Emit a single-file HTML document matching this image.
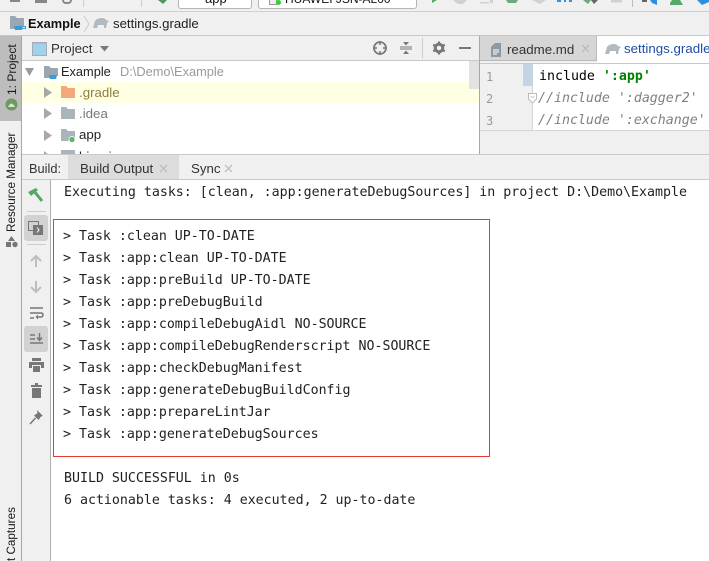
<!DOCTYPE html>
<html><head><meta charset="utf-8">
<style>
html,body{margin:0;padding:0;background:#f0f0f0}
#r{position:relative;width:709px;height:561px;overflow:hidden;background:#f0f0f0;font-family:"Liberation Sans",sans-serif;font-size:13px;color:#222}
#r div,#r svg,#r span.a{position:absolute}
.t{white-space:nowrap;line-height:16px}
.m{font-family:"DejaVu Sans Mono","Liberation Mono",monospace;font-size:13.28px;white-space:pre;line-height:22px;color:#1f1f1f}
.v{white-space:nowrap;transform-origin:0 0;transform:rotate(-90deg);line-height:14px;font-size:12px;color:#1a1a1a}
</style></head><body>
<div id="r">
<!-- top toolbar -->
<div style="left:0;top:11px;width:709px;height:1px;background:#d0d0d0"></div>
<div style="left:10px;top:0;width:10px;height:2px;background:#888"></div>
<div style="left:35px;top:0;width:12px;height:3px;background:#888"></div>
<div style="left:62px;top:0;width:10px;height:4px;border-radius:0 0 5px 5px;border:solid #888;border-width:0 2px 2px;box-sizing:border-box"></div>
<div style="left:83px;top:0;width:1px;height:7px;background:#ccc"></div>
<div style="left:141px;top:0;width:1px;height:7px;background:#ccc"></div>
<svg style="left:158px;top:0" width="10" height="4"><path d="M0 0L5 4L9 0Z" fill="#4e9a5a"/></svg>
<div style="left:178px;top:-8px;width:72px;height:15px;background:#fff;border:1px solid #b5b5b5;border-radius:3px"></div>
<div class="t" style="left:205px;top:-9px;color:#111">app</div>
<div style="left:258px;top:-8px;width:157px;height:15px;background:#fff;border:1px solid #b5b5b5;border-radius:3px"></div>
<div style="left:269px;top:-2px;width:6px;height:5px;border:1px solid #99a;background:#eee"></div>
<div style="left:276px;top:0;width:5px;height:5px;border-radius:50%;background:#2bd62b"></div>
<div class="t" style="left:285px;top:-9px;color:#111;font-size:12px">HUAWEI JSN-AL00</div>
<svg style="left:0;top:0" width="709" height="8">
<path d="M432 0V3L437 0Z" fill="#55a868"/>
<path d="M453 0L458 4L463 4L467 0Z" fill="#d0d0d0"/>
<path d="M480 2H489V3.500H480Z M490 0H493V3H490Z" fill="#cfcfcf"/>
<path d="M506 0L508 3H516L518 0Z" fill="#6fa880"/>
<path d="M532 0L540 4L546 0Z" fill="#d0d0d0"/>
<path d="M557 0H561V2H557Z M564 0H566V2H564Z M569 0H572V2H569Z" fill="#3d8fd0"/>
<path d="M583 0L588 4L591 0Z" fill="#6fa880"/><path d="M591 0L594 4L598 0Z" fill="#666"/>
<path d="M611 0H622V2.500H611Z" fill="#d0d0d0"/>
<path d="M642 0H647V2H642Z" fill="#666"/><path d="M650 0H657V5L652 3Z" fill="#2e8fdd"/>
<path d="M670 3L672 0H680L683 5H670Z" fill="#55a868"/>
<path d="M697 0H709V2L702 5Z" fill="#2e8fdd"/>
</svg>
<div style="left:632px;top:0;width:1px;height:7px;background:#bbb"></div>
<!-- breadcrumb -->
<svg style="left:10px;top:16px" width="16" height="15"><path d="M0 0H5L7 2H14V10H8V13H0Z" fill="#9aa7b0"/><path d="M4 10H13L12 14H5Z" fill="#3d9ad9"/><path d="M13 10.500H15.500V12.500H12.500" fill="none" stroke="#3d9ad9"/></svg>
<div class="t" style="left:28px;top:16px;font-weight:bold;color:#111;font-size:12.800px">Example</div>
<svg style="left:83px;top:15px" width="8" height="18"><path d="M1 1L6 9L1 17" fill="none" stroke="#ccc"/></svg>
<svg style="left:93px;top:17px" width="16" height="12"><path d="M0 11L2 4Q4 1 9 1Q12 1 13 3L16 4L14 6L13 11H11V8H5L4 11Z" fill="#b0bac0"/></svg>
<div class="t" style="left:113px;top:16px;color:#222;font-size:13.200px">settings.gradle</div>
<div style="left:0;top:35px;width:709px;height:1px;background:#c9c9c9"></div>
<!-- left stripe -->
<div style="left:0;top:36px;width:21px;height:85px;background:#bdbdbd"></div>
<div style="left:21px;top:36px;width:1px;height:525px;background:#a8a8a8"></div>
<div class="v" style="left:5px;top:95px">1: Project</div>
<svg style="left:5px;top:98px" width="13" height="13"><circle cx="6.500" cy="6.500" r="6" fill="#6a9a5c"/><path d="M3 9Q6.500 2 10 9Z" fill="#ddd"/></svg>
<div class="v" style="left:5px;top:232px;font-size:11.700px">Resource Manager</div>
<svg style="left:5px;top:236px" width="13" height="14"><path d="M6.500 0L10 5H3Z" fill="#777"/><rect x="1" y="6" width="5" height="5" fill="#777"/><circle cx="10" cy="8.500" r="2.700" fill="#777"/></svg>
<div class="v" style="left:5px;top:561px;font-size:11.700px">t Captures</div>
<!-- project header -->
<div style="left:22px;top:36px;width:458px;height:24px;background:#f0f0f0"></div>
<div style="left:32px;top:42px;width:13px;height:12px;background:#9fd3ec;border:1px solid #aab;box-shadow:inset 0 1px 0 #bbb"></div>
<div class="t" style="left:51px;top:41px;color:#333;font-size:13.300px">Project</div>
<svg style="left:100px;top:46px" width="10" height="6"><path d="M0 0H9L4.500 5.500Z" fill="#777"/></svg>
<svg style="left:372px;top:40px" width="16" height="16"><circle cx="8" cy="8" r="6" fill="none" stroke="#777" stroke-width="1.700"/><path d="M8 1V5M8 11V15M1 8H5M11 8H15" stroke="#777" stroke-width="1.500"/></svg>
<svg style="left:399px;top:41px" width="14" height="14"><path d="M1 6H13M1 8H13" stroke="#777"/><path d="M4 1H10L7 4.500Z M4 13H10L7 9.500Z" fill="#777"/></svg>
<div style="left:422px;top:38px;width:1px;height:20px;background:#ccc"></div>
<svg style="left:432px;top:41px" width="14" height="14"><circle cx="7" cy="7" r="3.800" fill="none" stroke="#777" stroke-width="3"/><path d="M7 .5V3M7 11V13.500M1.200 3.700L3.300 5M10.700 9L12.800 10.300M1.200 10.300L3.300 9M10.700 5L12.800 3.700" stroke="#777" stroke-width="2.200"/></svg>
<div style="left:459px;top:47px;width:12px;height:2px;background:#777"></div>
<div style="left:22px;top:60px;width:458px;height:1px;background:#c9c9c9"></div>
<!-- tree -->
<div style="left:22px;top:61px;width:458px;height:93px;background:#fff;overflow:hidden"></div>
<div style="left:22px;top:82px;width:458px;height:21px;background:#ffffe4"></div>
<div style="left:469px;top:61px;width:10px;height:28px;background:#e2e2e2"></div>
<svg style="left:25px;top:68px" width="10" height="9"><path d="M0 0H9L4.500 8Z" fill="#9a9a9a"/></svg>
<svg style="left:44px;top:65px" width="16" height="15"><path d="M0 1H5L7 3H14V11H8V13H0Z" fill="#9aa7b0"/><path d="M5 10H13L12 14H6Z" fill="#3d9ad9"/></svg>
<div class="t" style="left:61px;top:64px;color:#222;font-size:12.800px">Example</div>
<div class="t" style="left:120px;top:64px;color:#9a9a9a;font-size:12.800px">D:\Demo\Example</div>
<svg style="left:44px;top:87px" width="9" height="11"><path d="M0 0L8 5.500L0 11Z" fill="#a8a8a8"/></svg>
<svg style="left:61px;top:86px" width="15" height="13"><path d="M0 0H5L7 2H14V12H0Z" fill="#f4a778"/></svg>
<div class="t" style="left:79px;top:85px;color:#8f7f3f;font-size:13.300px">.gradle</div>
<svg style="left:44px;top:108px" width="9" height="11"><path d="M0 0L8 5.500L0 11Z" fill="#a8a8a8"/></svg>
<svg style="left:61px;top:107px" width="15" height="13"><path d="M0 0H5L7 2H14V12H0Z" fill="#aab4bb"/></svg>
<div class="t" style="left:79px;top:106px;color:#777;font-size:13.300px">.idea</div>
<svg style="left:44px;top:130px" width="9" height="11"><path d="M0 0L8 5.500L0 11Z" fill="#a8a8a8"/></svg>
<svg style="left:61px;top:129px" width="16" height="14"><path d="M0 0H5L7 2H14V12H0Z" fill="#aab4bb"/><circle cx="11" cy="10.500" r="3" fill="#5cb85c" stroke="#fff" stroke-width=".8"/></svg>
<div class="t" style="left:79px;top:127px;color:#222;font-size:13.300px">app</div>
<svg style="left:44px;top:151px" width="9" height="3"><path d="M0 0L4 3H0Z" fill="#a8a8a8"/></svg>
<div style="left:61px;top:150px;width:14px;height:4px;background:#aab4bb"></div>
<div style="left:79px;top:150px;width:55px;height:4px;overflow:hidden"><div class="t" style="left:0;top:-1px;color:#222;font-size:13.300px">binaries</div></div>
<div style="left:22px;top:154px;width:687px;height:1px;background:#c9c9c9"></div>
<!-- editor -->
<div style="left:479px;top:36px;width:1px;height:118px;background:#a8a8a8"></div>
<div style="left:480px;top:36px;width:117px;height:24px;background:#d6d6d6"></div>
<div style="left:596px;top:36px;width:1px;height:24px;background:#bcbcbc"></div>
<svg style="left:491px;top:43px" width="11" height="14"><path d="M0 4L4 0H10V14H0Z" fill="#8d9aa3"/><path d="M2 7H8M2 9H8M2 11H6" stroke="#fff"/></svg>
<div class="t" style="left:507px;top:42px;color:#333;font-size:13.300px">readme.md</div>
<svg style="left:581px;top:44px" width="9" height="9"><path d="M1 1L8 8M8 1L1 8" stroke="#b5b5b5"/></svg>
<div style="left:597px;top:36px;width:112px;height:27px;background:#fff"></div>
<svg style="left:605px;top:43px" width="16" height="12"><path d="M0 11L2 4Q4 1 9 1Q12 1 13 3L16 4L14 6L13 11H11V8H5L4 11Z" fill="#b0bac0"/></svg>
<div class="t" style="left:624px;top:41px;color:#1f4ea8;font-size:13.300px">settings.gradle</div>
<div style="left:480px;top:60px;width:117px;height:1px;background:#b8b8b8"></div>
<div style="left:480px;top:63px;width:229px;height:1px;background:#c9c9c9"></div>
<div style="left:480px;top:64px;width:53px;height:66px;background:#f0f0f0"></div>
<div style="left:533px;top:64px;width:176px;height:66px;background:#fff"></div>
<div style="left:532px;top:64px;width:1px;height:66px;background:#d5d5d5"></div>
<div style="left:523px;top:64px;width:10px;height:22px;background:#c3d4e4"></div>
<div class="m" style="left:486px;top:66px;color:#999;font-size:12px">1</div>
<div class="m" style="left:486px;top:88px;color:#999;font-size:12px">2</div>
<div class="m" style="left:486px;top:110px;color:#999;font-size:12px">3</div>
<div class="m" style="left:539px;top:66px;color:#000">include <b style="color:#008000">':app'</b></div>
<svg style="left:528px;top:93px" width="10" height="11"><path d="M.5 .5H8.500V6L4.500 10L.5 6Z M2.500 4H6.500" fill="#fff" stroke="#bbb"/></svg>
<div class="m" style="left:538px;top:88px;color:#808080;font-style:italic">//include ':dagger2'</div>
<div class="m" style="left:538px;top:110px;color:#808080;font-style:italic">//include ':exchange'</div>
<div style="left:480px;top:130px;width:229px;height:1px;background:#d5d5d5"></div>
<!-- build header -->
<div style="left:22px;top:155px;width:687px;height:24px;background:#f0f0f0"></div>
<div style="left:68px;top:155px;width:111px;height:24px;background:#dcdcdc"></div>
<div class="t" style="left:29px;top:161px;color:#333;font-size:12.800px">Build:</div>
<div class="t" style="left:80px;top:161px;color:#333;font-size:13.300px">Build Output</div>
<svg style="left:159px;top:164px" width="9" height="9"><path d="M1 1L8 8M8 1L1 8" stroke="#b5b5b5"/></svg>
<div class="t" style="left:191px;top:161px;color:#333;font-size:13.300px">Sync</div>
<svg style="left:224px;top:164px" width="9" height="9"><path d="M1 1L8 8M8 1L1 8" stroke="#b5b5b5"/></svg>
<div style="left:22px;top:179px;width:687px;height:1px;background:#c9c9c9"></div>
<!-- build left bar -->
<div style="left:50px;top:180px;width:1px;height:381px;background:#b0b0b0"></div>
<div style="left:51px;top:180px;width:658px;height:381px;background:#fff"></div>
<svg style="left:27px;top:186px" width="18" height="18"><path d="M1 6L9 2L11 4L4 10Z" fill="#55a868"/><path d="M7 5L15 15" stroke="#55a868" stroke-width="3"/></svg>
<div style="left:27px;top:211px;width:19px;height:1px;background:#ccc"></div>
<div style="left:24px;top:215px;width:24px;height:26px;background:#d2d2d2;border-radius:3px"></div>
<svg style="left:28px;top:221px" width="16" height="15"><rect x=".5" y=".5" width="10" height="9" fill="none" stroke="#777"/><rect x="5" y="4" width="10" height="10" fill="#777"/><path d="M9 6.500L11 9L9 11.500" fill="none" stroke="#fff"/></svg>
<div style="left:27px;top:244px;width:19px;height:1px;background:#ccc"></div>
<svg style="left:29px;top:254px" width="14" height="14"><path d="M7 13V2M2 7L7 2L12 7" fill="none" stroke="#bdbdbd" stroke-width="2"/></svg>
<svg style="left:29px;top:280px" width="14" height="14"><path d="M7 1V12M2 7L7 12L12 7" fill="none" stroke="#bdbdbd" stroke-width="2"/></svg>
<svg style="left:29px;top:306px" width="15" height="14"><path d="M1 2H14M1 7H12Q14 7 14 9Q14 11 11 11H8M1 12H5" fill="none" stroke="#777" stroke-width="1.500"/><path d="M9 8.500V13.500L6.500 11Z" fill="#777"/></svg>
<div style="left:24px;top:326px;width:24px;height:26px;background:#d2d2d2;border-radius:3px"></div>
<svg style="left:29px;top:332px" width="15" height="14"><path d="M1 3H6M1 7H6M1 11H14" stroke="#777" stroke-width="1.500"/><path d="M10.500 1V8M8 5.500L10.500 8.500L13 5.500" fill="none" stroke="#777" stroke-width="1.500"/></svg>
<svg style="left:29px;top:358px" width="15" height="14"><path d="M3 0H12V3H3Z M0 4H15V10H12V7H3V10H0Z M4 8H11V14H4Z" fill="#777"/></svg>
<svg style="left:30px;top:383px" width="13" height="15"><path d="M1 2H5V0H8V2H12V4H1Z M2 5H11V15H2Z" fill="#777"/></svg>
<svg style="left:29px;top:409px" width="15" height="16"><path d="M8 1L14 7L12 7.500L9.500 11L5 6.500L8.500 4Z" fill="#777"/><path d="M6.500 9L1 15" stroke="#777" stroke-width="1.500"/></svg>
<!-- console -->
<div class="m" style="left:64px;top:182px">Executing tasks: [clean, :app:generateDebugSources] in project D:\Demo\Example</div>
<div style="left:53px;top:219px;width:435px;height:236px;border:1px solid #e53935"></div>
<div class="m" style="left:63px;top:226px">&gt; Task :clean UP-TO-DATE
&gt; Task :app:clean UP-TO-DATE
&gt; Task :app:preBuild UP-TO-DATE
&gt; Task :app:preDebugBuild
&gt; Task :app:compileDebugAidl NO-SOURCE
&gt; Task :app:compileDebugRenderscript NO-SOURCE
&gt; Task :app:checkDebugManifest
&gt; Task :app:generateDebugBuildConfig
&gt; Task :app:prepareLintJar
&gt; Task :app:generateDebugSources</div>
<div class="m" style="left:64px;top:468px">BUILD SUCCESSFUL in 0s
6 actionable tasks: 4 executed, 2 up-to-date</div>
</div>
</body></html>
